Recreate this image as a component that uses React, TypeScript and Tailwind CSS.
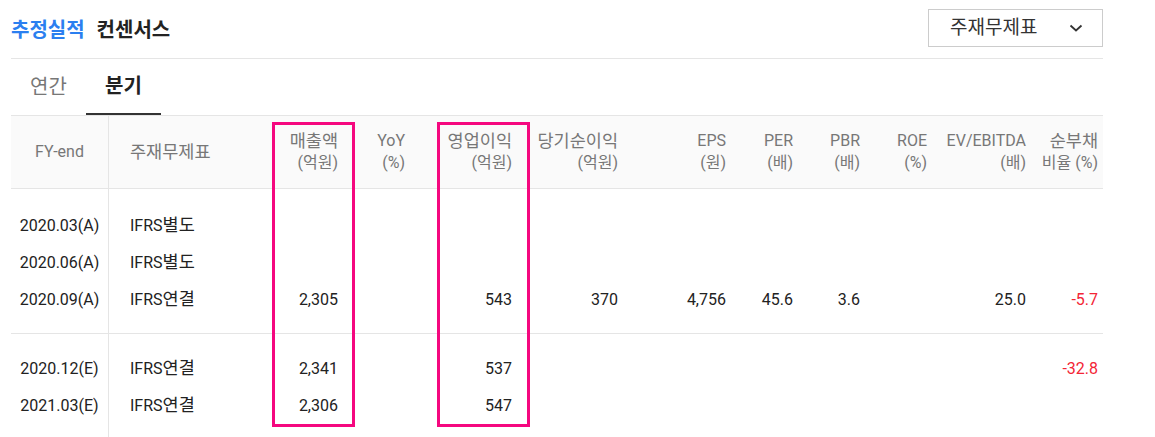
import React from 'react';

type Row = {
  fy: string;
  std: string;
  sales?: string;
  yoy?: string;
  op?: string;
  net?: string;
  eps?: string;
  per?: string;
  pbr?: string;
  roe?: string;
  ev?: string;
  debt?: string;
};

const actual: Row[] = [
  { fy: '2020.03(A)', std: 'IFRS별도' },
  { fy: '2020.06(A)', std: 'IFRS별도' },
  {
    fy: '2020.09(A)',
    std: 'IFRS연결',
    sales: '2,305',
    op: '543',
    net: '370',
    eps: '4,756',
    per: '45.6',
    pbr: '3.6',
    ev: '25.0',
    debt: '-5.7',
  },
];

const estimate: Row[] = [
  { fy: '2020.12(E)', std: 'IFRS연결', sales: '2,341', op: '537', debt: '-32.8' },
  { fy: '2021.03(E)', std: 'IFRS연결', sales: '2,306', op: '547' },
];

const cols = 'grid grid-cols-[98px_151px_83px_67px_107px_106px_108px_67px_67px_67px_99px_72px]';

const Head: React.FC<{ top: string; bottom?: string; ko?: boolean }> = ({ top, bottom, ko }) => (
  <div className="flex flex-col items-end justify-center pr-[5px] text-right leading-[22px]">
    <span className={ko ? 'text-[17.5px]' : ''}>{top}</span>
    {bottom && <span>{bottom}</span>}
  </div>
);

const Num: React.FC<{ v?: string; red?: boolean }> = ({ v, red }) => (
  <div className={`pr-[5px] text-right ${red ? 'text-[#f32536]' : ''}`}>{v}</div>
);

const DataRow: React.FC<{ row: Row }> = ({ row }) => (
  <div className={`${cols} h-[37px] items-center text-[16px] text-[#222]`}>
    <div className="flex h-full items-center justify-center border-r border-[#e5e5e5]">{row.fy}</div>
    <div className="pl-[21px]">
      {row.std.slice(0, 4)}
      <span className="text-[17.5px]">{row.std.slice(4)}</span>
    </div>
    <Num v={row.sales} />
    <Num v={row.yoy} />
    <Num v={row.op} />
    <Num v={row.net} />
    <Num v={row.eps} />
    <Num v={row.per} />
    <Num v={row.pbr} />
    <Num v={row.roe} />
    <Num v={row.ev} />
    <Num v={row.debt} red={row.debt?.startsWith('-')} />
  </div>
);

const Spacer: React.FC<{ h: string }> = ({ h }) => (
  <div className={`${cols} ${h}`}>
    <div className="border-r border-[#e5e5e5]" />
  </div>
);

export default function App() {
  return (
    <div className="h-[437px] overflow-hidden bg-white font-[Roboto,'Noto_Sans_CJK_KR',sans-serif]">
      <div className="relative ml-[11px] w-[1092px]">
        <div className="flex h-[59px] items-start justify-between border-b border-[#e5e5e5]">
          <h2 className="mt-[18px] flex gap-[12px] text-[20px] font-bold leading-[24px] text-[#222]">
            <span className="text-[#2b7ff0]">추정실적</span>
            <span>컨센서스</span>
          </h2>
          <button className="mt-[9px] flex h-[38px] w-[175px] items-center justify-between border border-[#cccccc] pl-[21px] pr-[19px] text-[19px] text-[#333]">
            <span>주재무제표</span>
            <svg width="14" height="8" viewBox="0 0 14 8" fill="none">
              <polyline points="1.5,1.5 7,6.5 12.5,1.5" stroke="#333" strokeWidth="1.8" />
            </svg>
          </button>
        </div>

        <div className="flex h-[56px] text-[20px]">
          <div className="flex w-[75px] items-center justify-center text-[#777]">연간</div>
          <div className="flex w-[75px] items-center justify-center border-b-2 border-[#333] font-bold text-[#222]">
            분기
          </div>
        </div>

        <div className={`${cols} h-[74px] border-y border-[#e5e5e5] bg-[#fafafa] text-[16px] text-[#777]`}>
          <div className="flex items-center justify-center border-r border-[#e5e5e5]">FY-end</div>
          <div className="flex items-center pl-[21px] text-[17.5px]">주재무제표</div>
          <Head top="매출액" bottom="(억원)" ko />
          <Head top="YoY" bottom="(%)" />
          <Head top="영업이익" bottom="(억원)" ko />
          <Head top="당기순이익" bottom="(억원)" ko />
          <Head top="EPS" bottom="(원)" />
          <Head top="PER" bottom="(배)" />
          <Head top="PBR" bottom="(배)" />
          <Head top="ROE" bottom="(%)" />
          <Head top="EV/EBITDA" bottom="(배)" />
          <Head top="순부채" bottom="비율 (%)" ko />
        </div>

        <Spacer h="h-[18px]" />
        {actual.map((r) => (
          <DataRow key={r.fy} row={r} />
        ))}
        <div className="h-[16px] border-b border-[#e5e5e5]">
          <div className="h-full w-[98px] border-r border-[#e5e5e5]" />
        </div>
        <Spacer h="h-[16px]" />
        {estimate.map((r) => (
          <DataRow key={r.fy} row={r} />
        ))}
        <Spacer h="h-[30px]" />

        <div className="pointer-events-none absolute left-[261px] top-[122px] h-[305px] w-[83px] border-[3px] border-[#f5077f]" />
        <div className="pointer-events-none absolute left-[426px] top-[122px] h-[305px] w-[93px] border-[3px] border-[#f5077f]" />
      </div>
    </div>
  );
}
